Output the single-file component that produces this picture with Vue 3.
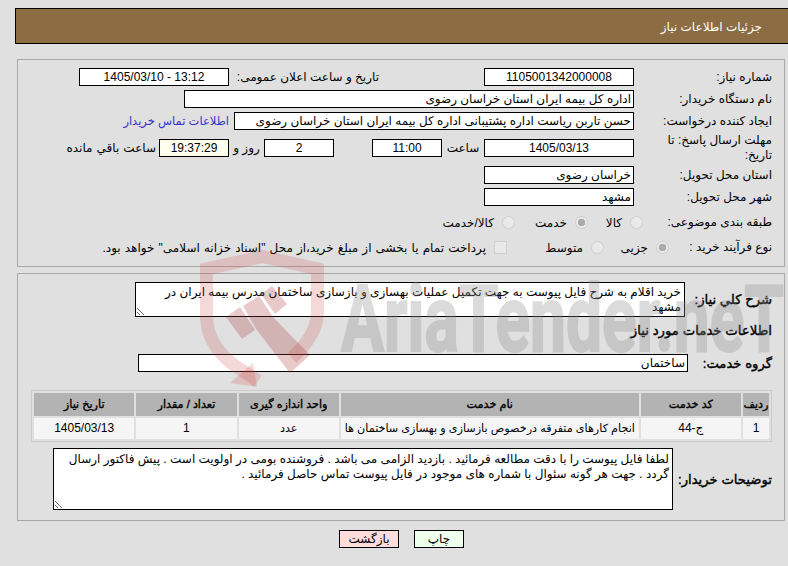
<script setup>
const columns = ['ردیف', 'کد خدمت', 'نام خدمت', 'واحد اندازه گیری', 'تعداد / مقدار', 'تاریخ نیاز']
const cells = ['1', 'ج-44', 'انجام کارهای متفرقه درخصوص بازسازی و بهسازی ساختمان ها', 'عدد', '1', '1405/03/13']
const summary = 'خرید اقلام به شرح فایل پیوست به جهت تکمیل عملیات بهسازی و بازسازی ساختمان مدرس بیمه ایران در مشهد'
const notes = 'لطفا فایل پیوست را با دقت مطالعه فرمائید . بازدید الزامی می باشد . فروشنده بومی در اولویت است . پیش فاکتور ارسال گردد . جهت هر گونه سئوال با شماره های موجود در فایل پیوست تماس حاصل فرمائید .'
</script>

<template>
  <div class="page" dir="rtl">
    <header class="title">جزئیات اطلاعات نیاز</header>

    <section class="panel first">
      <div class="row">
        <span class="label">شماره نیاز:</span>
        <span class="field w150 center">1105001342000008</span>
        <span class="label announce">تاریخ و ساعت اعلان عمومی:</span>
        <span class="field w150 center">13:12 - 1405/03/10</span>
      </div>
      <div class="row">
        <span class="label">نام دستگاه خریدار:</span>
        <span class="field w450">اداره کل بیمه ایران استان خراسان رضوی</span>
      </div>
      <div class="row">
        <span class="label">ایجاد کننده درخواست:</span>
        <span class="field w400">حسن تاربن ریاست اداره پشتیبانی اداره کل بیمه ایران استان خراسان رضوی</span>
        <a class="link">اطلاعات تماس خریدار</a>
      </div>
      <div class="row tall">
        <span class="label wrap">مهلت ارسال پاسخ: تا تاریخ:</span>
        <span class="field w150 center">1405/03/13</span>
        <span class="unit hour">ساعت</span>
        <span class="field w70 center">11:00</span>
        <span class="spacer"></span>
        <span class="field w70 center">2</span>
        <span class="unit day">روز و</span>
        <span class="field w70 center clock">19:37:29</span>
        <span class="unit left">ساعت باقي مانده</span>
      </div>
      <div class="row">
        <span class="label">استان محل تحویل:</span>
        <span class="field w150">خراسان رضوی</span>
      </div>
      <div class="row">
        <span class="label">شهر محل تحویل:</span>
        <span class="field w150">مشهد</span>
      </div>
      <div class="row choice subject">
        <span class="label short">طبقه بندی موضوعی:</span>
        <label class="option o55"><input type="radio" disabled name="subject" /><span>کالا</span></label>
        <label class="option o73"><input type="radio" disabled checked name="subject" /><span>خدمت</span></label>
        <label class="option"><input type="radio" disabled name="subject" /><span>کالا/خدمت</span></label>
      </div>
      <div class="row choice process">
        <span class="label shorter">نوع فرآیند خرید :</span>
        <label class="option o65"><input type="radio" disabled checked name="process" /><span>جزیی</span></label>
        <label class="option o97"><input type="radio" disabled name="process" /><span>متوسط</span></label>
        <label class="option"><input type="checkbox" disabled /><span class="pay">پرداخت تمام یا بخشی از مبلغ خرید،از محل "اسناد خزانه اسلامی" خواهد بود.</span></label>
      </div>
    </section>

    <section class="panel second">
      <div class="row area-row">
        <span class="label strong l87">شرح کلي نیاز:</span>
        <textarea class="area summary" readonly :value="summary"></textarea>
      </div>
      <h2 class="section-title">اطلاعات خدمات مورد نیاز</h2>
      <div class="row">
        <span class="label strong l84">گروه خدمت:</span>
        <span class="field w550">ساختمان</span>
      </div>
      <table class="services">
        <thead>
          <tr><th v-for="c in columns" :key="c">{{ c }}</th></tr>
        </thead>
        <tbody>
          <tr><td v-for="(c, i) in cells" :key="i">{{ c }}</td></tr>
        </tbody>
      </table>
      <div class="row area-row notes-row">
        <span class="label strong l99">توضیحات خریدار:</span>
        <textarea class="area notes" readonly :value="notes"></textarea>
      </div>
    </section>

    <div class="actions">
      <button class="btn print" type="button">چاپ</button>
      <button class="btn back" type="button">بازگشت</button>
    </div>

    <svg class="watermark" width="788" height="566" viewBox="0 0 788 566" aria-hidden="true">
      <path class="shield" d="M258 381 L240 369 C222 358 206.500 340 206.500 316 L206.500 269 L262 256.500 L317.500 269 L317.500 312 C317.500 330 305 346 292 358" />
      <polygon class="shield-fill" points="230,383 253,363 257,387" />
      <polygon class="hammer" points="226,317 240,307 255,330 242,339" />
      <polygon class="hammer" points="261,294 272,286 287,304 275,314" />
      <polygon class="hammer" points="243,306 259,296 273,317 310,355 290,373 256,329" />
      <text class="brand" x="341" y="351" textLength="443" lengthAdjust="spacingAndGlyphs">AriaTender.neT</text>
    </svg>
  </div>
</template>

<style>
html, body {
  margin: 0;
  background: #e0e0e0;
  overflow: hidden;
}
</style>

<style scoped>
.page {
  position: relative;
  box-sizing: border-box;
  width: 788px;
  height: 566px;
  overflow: hidden;
  padding: 8px 3px 0 15px;
  background: #e0e0e0;
  color: #000;
  font: 12px/15px "Liberation Sans", "DejaVu Sans", sans-serif;
}
.title {
  box-sizing: border-box;
  height: 36px;
  margin: 0 -20px 0 0;
  padding: 0 42px 0 0;
  border: 1px solid #000;
  background: #8c6c42;
  color: #fff;
  line-height: 36px;
}
.panel {
  margin: 15px 0 0 2px;
  border: 1px solid #a8a8a8;
  box-sizing: border-box;
  padding: 8px 12px 0;
}
.first { height: 208px; }
.second { height: 248px; margin-top: 6px; }
.row {
  display: flex;
  align-items: center;
  min-height: 18px;
  margin-bottom: 4px;
}
.tall { height: 28px; margin-bottom: 4px; }
.label { flex: none; width: 138px; white-space: nowrap; }
.wrap { box-sizing: border-box; padding-left: 14px; white-space: normal; }
.short { width: 129px; }
.shorter { width: 103px; }
.l87 { width: 87px; }
.l84 { width: 84px; }
.l99 { width: 99px; }
.announce { width: 145px; margin-right: 105px; margin-left: 5px; }
.strong { font-weight: 400; font-size: 13.200px; -webkit-text-stroke: 0.4px #000; }
.field {
  flex: none;
  box-sizing: border-box;
  height: 18px;
  padding: 0 2px;
  border: 1px solid #000;
  background: #fff;
  line-height: 16px;
  white-space: nowrap;
  overflow: hidden;
}
.center { text-align: center; }
.w150 { width: 150px; }
.w450 { width: 450px; }
.w400 { width: 400px; }
.w70 { width: 70px; }
.w550 { width: 550px; }
.clock { background: #ffffee; }
.link { margin-right: 5px; color: #3333cc; font-size: 11.500px; }
.unit { flex: none; }
.hour { width: 42px; text-align: center; }
.spacer { width: 38px; flex: none; }
.day { width: 35px; text-align: center; }
.left { margin-right: 3px; word-spacing: 0.7px; }
.subject { margin-top: 7px; margin-bottom: 7px; }
.option { display: flex; align-items: center; flex: none; gap: 8px; }
.option span { padding-top: 3px; }
.o55 { width: 55px; }
.o73 { width: 73px; }
.o65 { width: 65px; }
.o97 { width: 97px; }
.pay { word-spacing: 0.800px; }
.option input {
  appearance: none;
  flex: none;
  box-sizing: border-box;
  width: 13px;
  height: 13px;
  margin: 0;
  border: 1px solid #cfcfcf;
  background: #e9e9e9;
}
.option input[type="radio"] { border-radius: 50%; }
.option input:checked { background: radial-gradient(circle, #ababab 0 3.5px, #e9e9e9 4px); }
.area-row { align-items: center; }
.area {
  flex: none;
  box-sizing: border-box;
  margin: 0;
  padding: 3px 3px 0;
  border: 1px solid #000;
  border-radius: 0;
  outline: none;
  background: #fff;
  color: #000;
  font: inherit;
  overflow: hidden;
  resize: both;
}
.summary { width: 550px; height: 35px; padding-top: 2px; }
.notes { width: 620px; height: 62px; }
.section-title {
  margin: 6px 0 15px;
  font-size: 13.300px;
  font-weight: 400;
  line-height: 16px;
  -webkit-text-stroke: 0.4px #000;
}
.services {
  width: 741px;
  margin: 18px 0 6px;
  border: 1px solid #cccccc;
  border-collapse: separate;
  border-spacing: 2px;
  table-layout: fixed;
  font-size: 11.200px;
}
.services th, .services td { padding: 0; text-align: center; white-space: nowrap; }
.services th { height: 23px; background: #b3b3b3; font-weight: 400; -webkit-text-stroke: 0.35px #000; }
.services td { height: 21px; background: #f5f5f5; }
.services td:nth-child(1), .services td:nth-child(2), .services td:nth-child(5), .services td:nth-child(6) { font-size: 12px; }
.services th:nth-child(1) { width: 26px; }
.services th:nth-child(2) { width: 100px; }
.services th:nth-child(3) { width: 297px; }
.services th:nth-child(4), .services th:nth-child(5), .services th:nth-child(6) { width: 100px; }
.actions {
  display: flex;
  justify-content: center;
  gap: 15px;
  margin: 9px 0 0 3px;
}
.btn {
  box-sizing: border-box;
  height: 18px;
  padding: 0;
  border: 1px solid #000;
  border-radius: 0;
  color: #000;
  font: inherit;
  line-height: 16px;
}
.print { width: 50px; background: #eeffee; }
.back { width: 60px; background: #ffdddd; }
.watermark {
  position: absolute;
  top: 0;
  left: 0;
  pointer-events: none;
  direction: ltr;
}
.shield { fill: none; stroke: rgba(205, 60, 60, 0.2); stroke-width: 13; }
.shield-fill { fill: rgba(205, 60, 60, 0.2); }
.hammer { fill: rgba(170, 50, 50, 0.26); }
.brand {
  direction: ltr;
  fill: #8c8c8c;
  stroke: #8c8c8c;
  stroke-width: 2;
  opacity: 0.3;
  font: 700 92px Roboto, "Liberation Sans", sans-serif;
}
</style>
